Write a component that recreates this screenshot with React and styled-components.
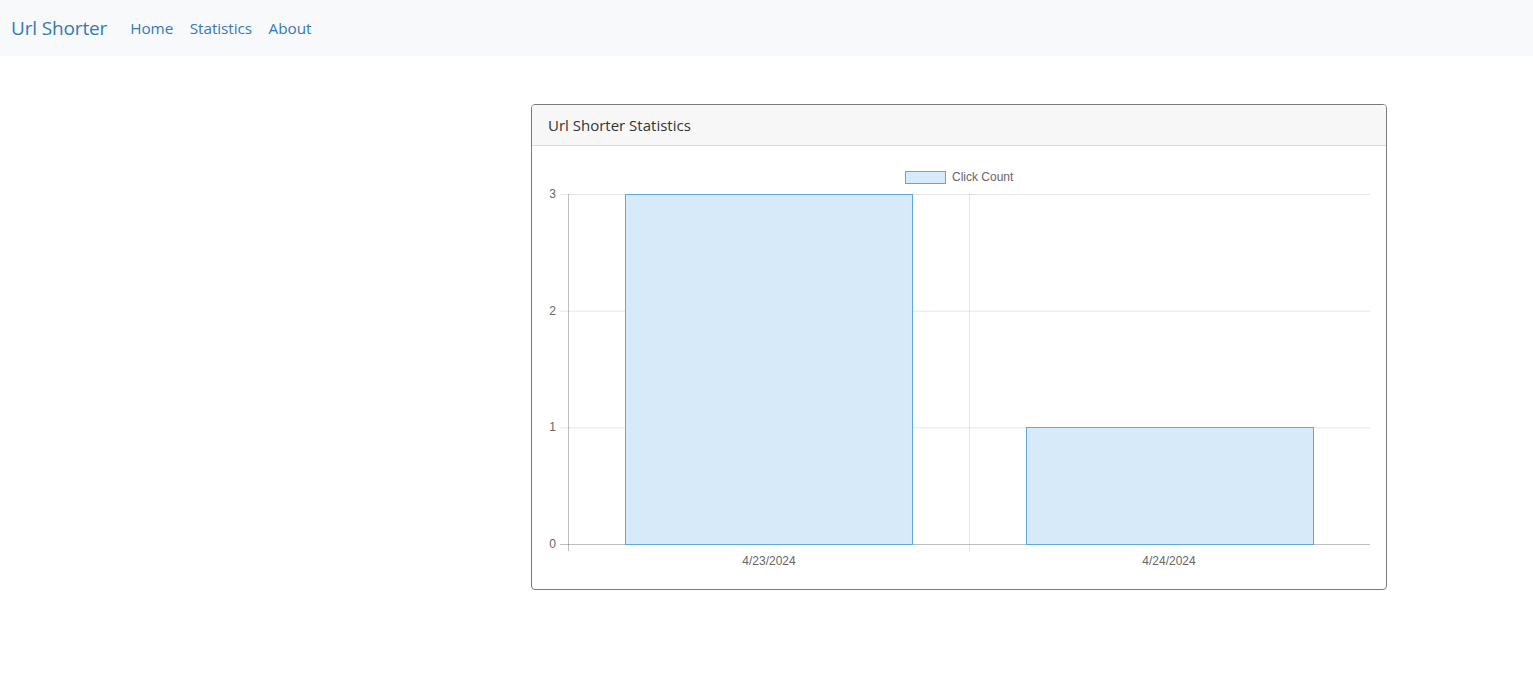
import React from "react";
import styled, { createGlobalStyle } from "styled-components";

const Global = createGlobalStyle`
  html, body { margin: 0; padding: 0; background: #fff; }
  body { font-family: "Open Sans", "Noto Sans", sans-serif; color: #212529; }
`;

const Navbar = styled.nav`
  height: 56px;
  background: #f8f9fa;
  display: flex;
  align-items: center;
  padding: 0 11px;
  box-sizing: border-box;
`;

const Brand = styled.a`
  font-size: 19px;
  color: #337ab7;
  text-decoration: none;
  margin-right: 23px;
  letter-spacing: -0.15px;
`;

const NavList = styled.div`
  display: flex;
  gap: 16.5px;
`;

const NavLink = styled.a`
  font-size: 15.3px;
  color: #337ab7;
  text-decoration: none;
  letter-spacing: -0.05px;
`;

const Main = styled.main`
  display: grid;
  grid-template-columns: 531px 856px;
  padding-top: 48px;
`;

const Card = styled.section`
  grid-column: 2;
  border: 1px solid #7a7a7a;
  border-radius: 4px;
  overflow: hidden;
  box-sizing: border-box;
`;

const CardHeader = styled.div`
  height: 40px;
  background: #f7f7f7;
  border-bottom: 1px solid #d9d9d9;
  display: flex;
  align-items: center;
  padding: 0 16px;
  font-size: 15px;
  color: #333;
`;

const CardBody = styled.div`
  padding: 16px 15px 16px 16px;
`;

const ChartSvg = styled.svg`
  display: block;
  font-family: "Liberation Sans", Arial, sans-serif;
  font-size: 12px;
`;

const ys = [32, 148.67, 265.33, 382];
const grid = "rgba(0,0,0,0.1)";
const axis = "rgba(0,0,0,0.25)";
const barFill = "#d7eaf9";
const barStroke = "#5fa8dd";

function Chart() {
  return (
    <ChartSvg width="822" height="411" viewBox="0 0 822 411">
      {ys.map((y, i) => (
        <line key={i} x1="12" x2="822" y1={y + 0.5} y2={y + 0.5} stroke={i === 3 ? axis : grid} />
      ))}
      <line x1="20.5" x2="20.5" y1="32" y2="389" stroke={axis} />
      <line x1="421.5" x2="421.5" y1="32" y2="389" stroke={grid} />
      {["3", "2", "1", "0"].map((t, i) => (
        <text key={t} x="8" y={ys[i] + 4} textAnchor="end" fill="#666">{t}</text>
      ))}
      <rect x="77.5" y="32.5" width="287" height="350" fill={barFill} stroke={barStroke} />
      <rect x="478.5" y="265.5" width="287" height="117" fill={barFill} stroke={barStroke} />
      <text x="221" y="403" textAnchor="middle" fill="#666">4/23/2024</text>
      <text x="621" y="403" textAnchor="middle" fill="#666">4/24/2024</text>
      <rect x="357.5" y="9.5" width="40" height="12" fill={barFill} stroke={barStroke} />
      <text x="404" y="19" fill="#666">Click Count</text>
    </ChartSvg>
  );
}

export default function App() {
  return (
    <>
      <Global />
      <Navbar>
        <Brand href="#">Url Shorter</Brand>
        <NavList>
          <NavLink href="#">Home</NavLink>
          <NavLink href="#">Statistics</NavLink>
          <NavLink href="#">About</NavLink>
        </NavList>
      </Navbar>
      <Main>
        <Card>
          <CardHeader>Url Shorter Statistics</CardHeader>
          <CardBody>
            <Chart />
          </CardBody>
        </Card>
      </Main>
    </>
  );
}
